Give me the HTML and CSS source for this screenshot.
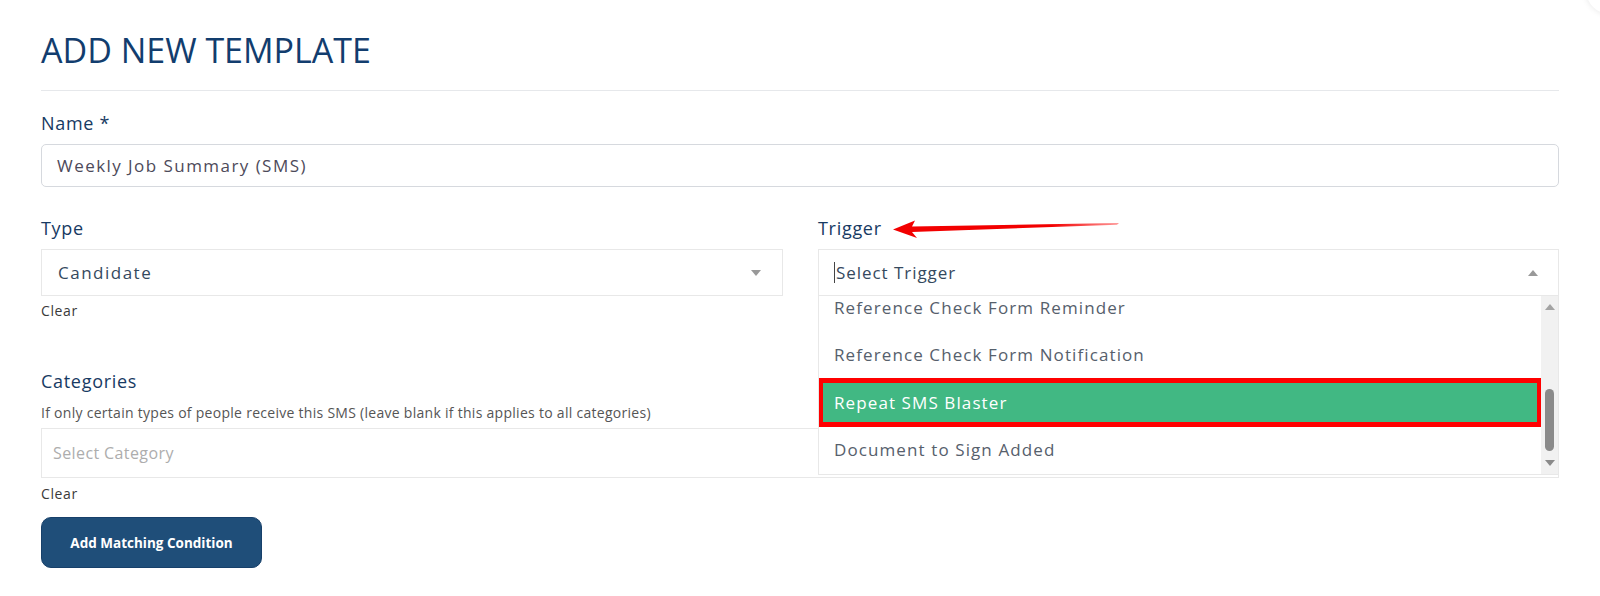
FILE: index.html
```html
<!DOCTYPE html>
<html lang="en">
<head>
<meta charset="utf-8">
<title>Add New Template</title>
<link rel="stylesheet" href="styles.css">
</head>
<body>
<div class="corner"></div>
<div class="page">
  <h1 class="title">ADD NEW TEMPLATE</h1>
  <div class="divider"></div>

  <div class="field field-name">
    <label class="label">Name *</label>
    <div class="text-input">Weekly Job Summary (SMS)</div>
  </div>

  <div class="row">
    <div class="col">
      <label class="label">Type</label>
      <div class="select">
        <span class="select-value">Candidate</span>
        <span class="caret caret-down"></span>
      </div>
      <div class="clear">Clear</div>
    </div>
    <div class="col">
      <div class="label-row">
        <label class="label">Trigger</label>
        <svg class="annot-arrow" width="226" height="20" viewBox="0 0 226 20">
          <defs>
            <linearGradient id="tail" x1="0" y1="0" x2="1" y2="0">
              <stop offset="0" stop-color="#f20000"/>
              <stop offset="0.7" stop-color="#f20000"/>
              <stop offset="1" stop-color="#ff9a9a"/>
            </linearGradient>
          </defs>
          <polygon points="0,10.5 22,1.5 19,7.5 226,4 224,5.8 19,13 24,19" fill="url(#tail)"/>
        </svg>
      </div>
      <div class="select select-open">
        <span class="text-cursor"></span>
        <span class="select-value trig">Select Trigger</span>
        <span class="caret caret-up"></span>
        <div class="dropdown">
          <div class="options">
            <div class="options-inner">
              <div class="option">Reference Check Form Reminder</div>
              <div class="option">Reference Check Form Notification</div>
              <div class="option option-active">Repeat SMS Blaster</div>
              <div class="option">Document to Sign Added</div>
            </div>
          </div>
          <div class="scrollbar">
            <span class="sb-up"></span>
            <span class="sb-thumb"></span>
            <span class="sb-down"></span>
          </div>
        </div>
      </div>
    </div>
  </div>

  <div class="field field-categories">
    <label class="label label-cat">Categories</label>
    <div class="help">If only certain types of people receive this SMS (leave blank if this applies to all categories)</div>
    <div class="select select-cat">
      <span class="placeholder">Select Category</span>
    </div>
    <div class="clear clear-cat">Clear</div>
  </div>

  <button class="btn">Add Matching Condition</button>
</div>
</body>
</html>
```

FILE: styles.css
```css
* { box-sizing: border-box; }

html, body {
  margin: 0;
  padding: 0;
  background: #ffffff;
}

body {
  width: 1600px;
  height: 596px;
  overflow: hidden;
  position: relative;
  font-family: "Open Sans", "Noto Sans", sans-serif;
  color: #35495e;
}

.corner {
  position: absolute;
  right: -34px;
  top: -34px;
  width: 48px;
  height: 48px;
  border-radius: 50%;
  box-shadow: 0 0 6px rgba(0, 0, 0, 0.10);
}

.page {
  padding: 27px 41px 0 41px;
}

.title {
  margin: 0;
  font-size: 34px;
  line-height: 46px;
  font-weight: 400;
  color: #123d6e;
}

.divider {
  height: 1px;
  background: #e6e8eb;
  margin-top: 17px;
}

.field-name {
  margin-top: 20px;
}

.label {
  display: block;
  font-size: 18px;
  line-height: 24px;
  font-weight: 500;
  letter-spacing: 0.7px;
  color: #173a63;
  margin-bottom: 9px;
}

.text-input {
  height: 43px;
  border: 1px solid #d6d9de;
  border-radius: 5px;
  padding: 0 15px;
  display: flex;
  align-items: center;
  font-size: 17px;
  letter-spacing: 1.45px;
  color: #4d4a5a;
}

.row {
  display: grid;
  grid-template-columns: 742px 741px;
  column-gap: 35px;
  margin-top: 29px;
}

.label-row {
  display: flex;
  align-items: center;
  margin-bottom: 9px;
}

.label-row .label {
  margin-bottom: 0;
}

.annot-arrow {
  margin-left: 11px;
  margin-top: 1px;
}

.select {
  position: relative;
  height: 47px;
  border: 1px solid #e8e8e8;
  display: flex;
  align-items: center;
  padding: 0 21px 0 16px;
  font-size: 17px;
  color: #35495e;
  background: #fff;
}

.select-value {
  letter-spacing: 1.5px;
}

.select-value.trig {
  letter-spacing: 0.95px;
}

.select-open {
  padding-right: 20px;
}

.caret {
  margin-left: auto;
  width: 0;
  height: 0;
  border-style: solid;
}

.caret-down {
  border-width: 6px 5px 0 5px;
  border-color: #999 transparent transparent transparent;
}

.caret-up {
  border-width: 0 5px 6px 5px;
  border-color: transparent transparent #999 transparent;
}

.text-cursor {
  width: 1px;
  height: 21px;
  background: #444;
  margin-left: -1px;
  margin-right: 1px;
}

.dropdown {
  position: absolute;
  left: -1px;
  right: -1px;
  top: 46px;
  height: 179px;
  border: 1px solid #e8e8e8;
  border-top: none;
  background: #fff;
  display: flex;
  z-index: 5;
}

.options {
  flex: 1;
  overflow: hidden;
}

.options-inner {
  margin-top: -12.5px;
}

.option {
  height: 47.5px;
  display: flex;
  align-items: center;
  padding-left: 15px;
  font-size: 17px;
  letter-spacing: 1.1px;
  color: #56606c;
}

.option-active {
  background: #41b883;
  color: #ffffff;
  outline: 5px solid #ff0000;
  outline-offset: -4px;
}

.scrollbar {
  width: 17px;
  background: #f1f1f1;
  display: flex;
  flex-direction: column;
  align-items: center;
}

.sb-up {
  margin-top: 8px;
  width: 0;
  height: 0;
  border-style: solid;
  border-width: 0 5px 6px 5px;
  border-color: transparent transparent #a3a3a3 transparent;
}

.sb-thumb {
  margin-top: 79px;
  width: 9px;
  height: 62px;
  border-radius: 5px;
  background: #8a8a8a;
}

.sb-down {
  margin-top: 9px;
  width: 0;
  height: 0;
  border-style: solid;
  border-width: 6px 5px 0 5px;
  border-color: #8a8a8a transparent transparent transparent;
}

.clear {
  font-size: 14px;
  line-height: 20px;
  letter-spacing: 0.6px;
  margin-top: 5px;
  color: #3a3a3a;
}

.field-categories {
  margin-top: 48px;
}

.label-cat {
  margin-bottom: 10px;
}

.help {
  font-size: 14px;
  line-height: 20px;
  letter-spacing: 0.28px;
  color: #555;
}

.select-cat {
  margin-top: 5px;
  height: 50px;
  padding-left: 11px;
}

.placeholder {
  color: #adadad;
  font-size: 16px;
  letter-spacing: 0.4px;
}

.clear-cat {
  margin-top: 6px;
}

.btn {
  display: block;
  margin-top: 13px;
  width: 221px;
  height: 51px;
  background: #1f4e79;
  color: #ffffff;
  border: 1px solid #17406a;
  border-radius: 10px;
  font-family: "Open Sans", "Noto Sans", sans-serif;
  font-weight: 700;
  font-size: 13.5px;
  padding: 0;
}
```
